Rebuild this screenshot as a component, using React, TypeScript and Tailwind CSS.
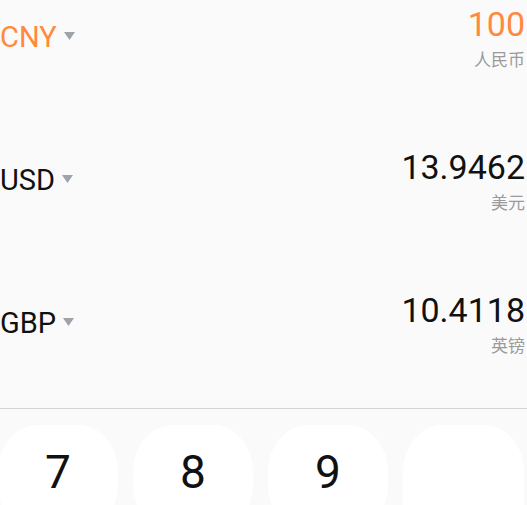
import React from "react";

const rows = [
  { code: "CNY", value: "100", name: "人民币", active: true, h: "h-[143px]" },
  { code: "USD", value: "13.9462", name: "美元", active: false, h: "h-[143px]" },
  { code: "GBP", value: "10.4118", name: "英镑", active: false, h: "flex-1" },
];

function Caret() {
  return (
    <svg width="11" height="8" viewBox="0 0 11 8" className="ml-[7px] mb-[3px]">
      <polygon points="0,0 11,0 5.5,8" fill="#9ea3a9" />
    </svg>
  );
}

function CurrencyRow({ code, value, name, active, h }: (typeof rows)[number]) {
  return (
    <div className={`${h} flex items-start justify-between pr-[2px]`}>
      <div className="mt-[19px] h-[36px] flex items-center">
        <span
          className={`text-[29px] leading-[36px] ${active ? "text-[#ff8a3d]" : "text-[#111111]"}`}
        >
          {code}
        </span>
        <Caret />
      </div>
      <div className="pt-[5px] flex flex-col items-end">
        <span
          className={`text-[34px] leading-[38px] ${active ? "text-[#ff8a3d]" : "text-[#111111]"}`}
        >
          {value}
        </span>
        <span
          className="mt-[5px] text-[17px] leading-[22px] text-[#9a9a9a]"
          style={{ fontFamily: '"Noto Sans CJK SC", sans-serif' }}
        >
          {name}
        </span>
      </div>
    </div>
  );
}

export default function App() {
  return (
    <div
      className="w-[527px] h-[505px] overflow-hidden bg-[#fafafa] flex flex-col"
      style={{ fontFamily: 'Roboto, "Noto Sans CJK SC", sans-serif' }}
    >
      {/* currency list */}
      <div className="h-[408px] shrink-0 flex flex-col">
        {rows.map((r) => (
          <CurrencyRow key={r.code} {...r} />
        ))}
      </div>

      <div className="h-px shrink-0 bg-[#d4d4d4]" />

      {/* keypad */}
      <div className="shrink-0 pt-[16px] -ml-[2px] flex items-start gap-[15px]">
        {["7", "8", "9"].map((k) => (
          <button
            key={k}
            className="w-[120px] h-[106px] shrink-0 rounded-[40px/46px] bg-white flex justify-center pt-[24px]"
          >
            <span className="text-[46px] leading-[46px] text-[#111111]">{k}</span>
          </button>
        ))}
        <button className="w-[121px] h-[220px] shrink-0 rounded-[40px/46px] bg-white" />
      </div>
    </div>
  );
}
